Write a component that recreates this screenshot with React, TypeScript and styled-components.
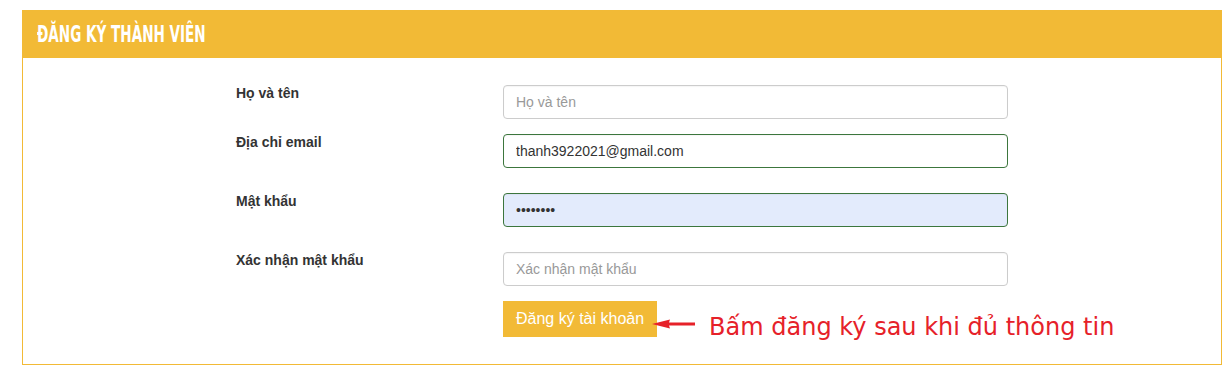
import React from "react";
import styled, { createGlobalStyle } from "styled-components";

const GlobalStyle = createGlobalStyle`
  html, body { margin: 0; padding: 0; background: #fff; }
  body { font-family: "Liberation Sans", Arial, sans-serif; color: #333; }
  * { box-sizing: border-box; }
`;

const Page = styled.div`
  padding: 10px 6px 0 22px;
`;

const Panel = styled.section`
  border: 1px solid #f2ba36;
  background: #fff;
`;

const PanelHeading = styled.header`
  height: 48px;
  margin: -1px -1px 0 -1px;
  padding: 0 15px;
  background: #f2ba36;
  display: flex;
  align-items: center;
`;

const Title = styled.h2`
  margin: 0;
  display: inline-block;
  font-family: "DejaVu Sans Condensed", "DejaVu Sans", sans-serif;
  font-stretch: condensed;
  font-weight: 700;
  font-size: 23px;
  line-height: 23px;
  color: #fff;
  white-space: nowrap;
  transform: scaleX(0.655);
  transform-origin: left center;
`;

const PanelBody = styled.div`
  padding: 27px 0 27px 213px;
`;

const Row = styled.div<{ $gap: number }>`
  display: grid;
  grid-template-columns: 267px 505px;
  align-items: start;
  margin-bottom: ${(p) => p.$gap}px;
`;

const Label = styled.label`
  display: block;
  margin-top: -1px;
  font-size: 14px;
  line-height: 18px;
  font-weight: 700;
  color: #333;
`;

const Input = styled.input<{ $success?: boolean; $autofill?: boolean }>`
  display: block;
  width: 505px;
  height: 34px;
  padding: 0 12px;
  border: 1px solid ${(p) => (p.$success ? "#3c763d" : "#cccccc")};
  border-radius: 4px;
  background: ${(p) => (p.$autofill ? "#e3ebfc" : "#fff")};
  font-family: "Liberation Sans", Arial, sans-serif;
  font-size: 14px;
  color: #333;
  outline: none;
  box-shadow: inset 0 1px 1px rgba(0, 0, 0, 0.04);
  &::placeholder { color: #999; }
`;

const ActionCell = styled.div`
  grid-column: 2;
  height: 36px;
  display: flex;
  align-items: flex-start;
  white-space: nowrap;
`;

const SubmitButton = styled.button`
  height: 36px;
  padding: 0 13px;
  border: none;
  border-radius: 0;
  background: #f2ba36;
  color: #fff;
  font-family: "Liberation Sans", Arial, sans-serif;
  font-size: 16px;
  line-height: 20px;
  cursor: pointer;
`;

const Arrow = styled.svg`
  display: block;
  flex: none;
  margin: 13px 0 0 -5px;
`;

const Hint = styled.span`
  margin: 12px 0 0 14px;
  font-family: "DejaVu Sans", Verdana, sans-serif;
  font-size: 24px;
  line-height: 28px;
  color: #e62129;
`;

export default function App() {
  return (
    <>
      <GlobalStyle />
      <Page>
        <Panel>
          <PanelHeading>
            <Title>ĐĂNG KÝ THÀNH VIÊN</Title>
          </PanelHeading>
          <PanelBody>
            <Row $gap={15}>
              <Label>Họ và tên</Label>
              <Input placeholder="Họ và tên" />
            </Row>
            <Row $gap={25}>
              <Label>Địa chỉ email</Label>
              <Input $success defaultValue="thanh3922021@gmail.com" />
            </Row>
            <Row $gap={25}>
              <Label>Mật khẩu</Label>
              <Input $success $autofill type="password" defaultValue="12345678" />
            </Row>
            <Row $gap={15}>
              <Label>Xác nhận mật khẩu</Label>
              <Input placeholder="Xác nhận mật khẩu" />
            </Row>
            <Row $gap={0}>
              <ActionCell>
                <SubmitButton type="button">Đăng ký tài khoản</SubmitButton>
                <Arrow width="43" height="20" viewBox="0 0 43 20">
                  <path d="M0 10 L18 5.5 L17 8.5 L43 8.5 L43 11.5 L17 11.5 L18 14.5 Z" fill="#e62129" />
                </Arrow>
                <Hint>Bấm đăng ký sau khi đủ thông tin</Hint>
              </ActionCell>
            </Row>
          </PanelBody>
        </Panel>
      </Page>
    </>
  );
}
